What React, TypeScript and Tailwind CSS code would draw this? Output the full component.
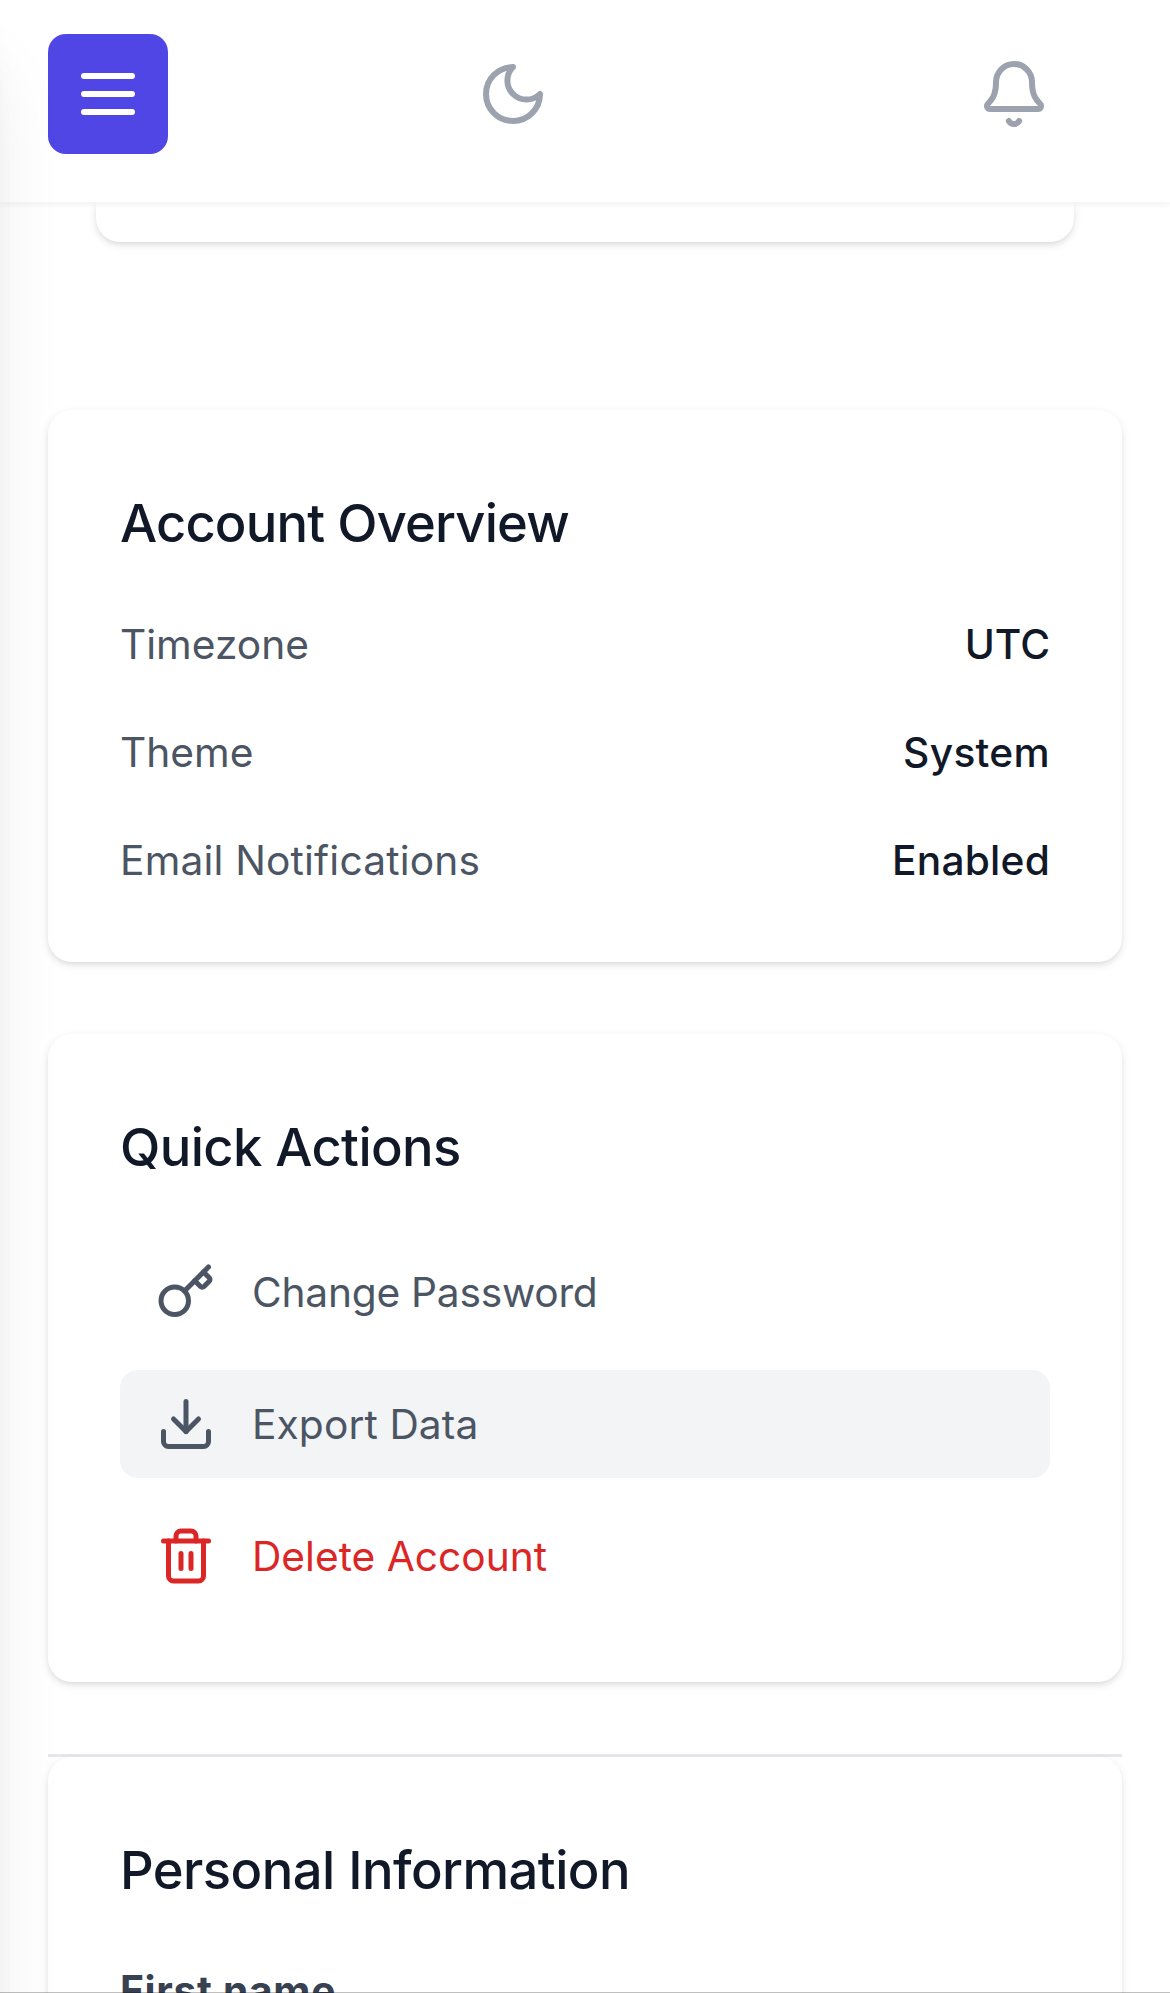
import type { ReactNode } from "react";
import { Bell, Download, Key, Trash2 } from "lucide-react";

const cardShadow = "shadow-[0_3px_9px_rgba(0,0,0,0.1),0_3px_6px_-3px_rgba(0,0,0,0.1)]";

function Card({ title, titleClass, children }: { title: string; titleClass: string; children: ReactNode }) {
  return (
    <section className={`rounded-[24px] bg-white p-[72px] ${cardShadow}`}>
      <h3 className={`mb-12 -translate-y-px whitespace-nowrap text-[52.5px] leading-[84px] font-medium text-[#111827] ${titleClass}`}>{title}</h3>
      {children}
    </section>
  );
}

const overview = [
  { label: "Timezone", value: "UTC", labelClass: "tracking-[0px]", valueClass: "tracking-[0px]" },
  { label: "Theme", value: "System", labelClass: "tracking-[0px]", valueClass: "tracking-[0.3px]" },
  { label: "Email Notifications", value: "Enabled", labelClass: "tracking-[0.18px]", valueClass: "tracking-[0.2px]" },
];

export default function App() {
  return (
    <div
      className="relative flex h-[1993px] w-[1170px] flex-col overflow-hidden bg-white antialiased"
      style={{ fontFamily: 'Inter, "Liberation Sans", sans-serif' }}
    >
      <header className="z-10 flex h-[202px] shrink-0 items-start bg-white pt-[34px] pr-[120px] pl-12 shadow-[0_3px_6px_rgba(0,0,0,0.05)]">
        <button aria-label="Menu" className="flex size-[120px] items-center justify-center rounded-[18px] bg-[#4f46e5] text-white">
          <svg className="size-[72px]" viewBox="0 0 24 24" fill="none" stroke="currentColor" strokeWidth="2" strokeLinecap="round">
            <path d="M4 6h16M4 12h16M4 18h16" />
          </svg>
        </button>
        <button aria-label="Theme" className="ml-[309px] flex h-[120px] items-center text-[#9ca3af]">
          <svg className="size-[72px]" viewBox="0 0 24 24" fill="none" stroke="currentColor" strokeWidth="2" strokeLinecap="round" strokeLinejoin="round">
            <path d="M12 3a6 6 0 0 0 9 9 9 9 0 1 1-9-9Z" />
          </svg>
        </button>
        <button aria-label="Notifications" className="ml-auto flex h-[120px] items-center text-[#9ca3af]">
          <Bell size={72} strokeWidth={2} />
        </button>
      </header>

      <main className="flex flex-col px-12">
        <div className={`mx-12 h-10 rounded-b-[24px] bg-white ${cardShadow}`} />

        <div className="mt-[168px] flex flex-col gap-[72px]">
          <Card title="Account Overview" titleClass="tracking-[-0.85px]">
            <dl className="flex translate-y-px flex-col gap-12">
              {overview.map((row) => (
                <div key={row.label} className="flex justify-between text-[40.7px] leading-[60px] whitespace-nowrap">
                  <dt className={`text-[#4b5563] ${row.labelClass}`}>{row.label}</dt>
                  <dd className={`font-medium text-[#111827] ${row.valueClass}`}>{row.value}</dd>
                </div>
              ))}
            </dl>
          </Card>

          <Card title="Quick Actions" titleClass="tracking-[-0.6px]">
            <div className="flex flex-col gap-6 text-[40.7px] leading-[60px] whitespace-nowrap text-[#4b5563]">
              <button className="flex items-center gap-9 rounded-[18px] px-9 py-6">
                <Key size={60} />
                <span className="translate-y-px tracking-[-0.24px]">Change Password</span>
              </button>
              <button className="flex items-center gap-9 rounded-[18px] bg-[#f3f4f6] px-9 py-6">
                <Download size={60} />
                <span className="translate-y-px tracking-[0.1px]">Export Data</span>
              </button>
              <button className="flex items-center gap-9 rounded-[18px] px-9 py-6 text-[#dc2626]">
                <Trash2 size={60} />
                <span className="translate-y-px tracking-[0px]">Delete Account</span>
              </button>
            </div>
          </Card>

          <div className="border-t-[3px] border-[#e5e7eb]">
            <Card title="Personal Information" titleClass="tracking-[-0.55px]">
              <label className="block text-[40.7px] leading-[60px] font-bold whitespace-nowrap text-[#374151]">
                <span className="tracking-[0.7px]">First name</span>
              </label>
            </Card>
          </div>
        </div>
      </main>

      {/* Collapsed sidebar: only its drop shadow reaches the viewport */}
      <aside className="absolute top-0 -left-[400px] z-20 h-[2100px] w-[400px] bg-white shadow-[0_60px_75px_-15px_rgba(0,0,0,0.1),0_24px_30px_-18px_rgba(0,0,0,0.1)]" />
      <div className="absolute bottom-0 left-0 z-30 h-px w-full bg-black/25" />
    </div>
  );
}
